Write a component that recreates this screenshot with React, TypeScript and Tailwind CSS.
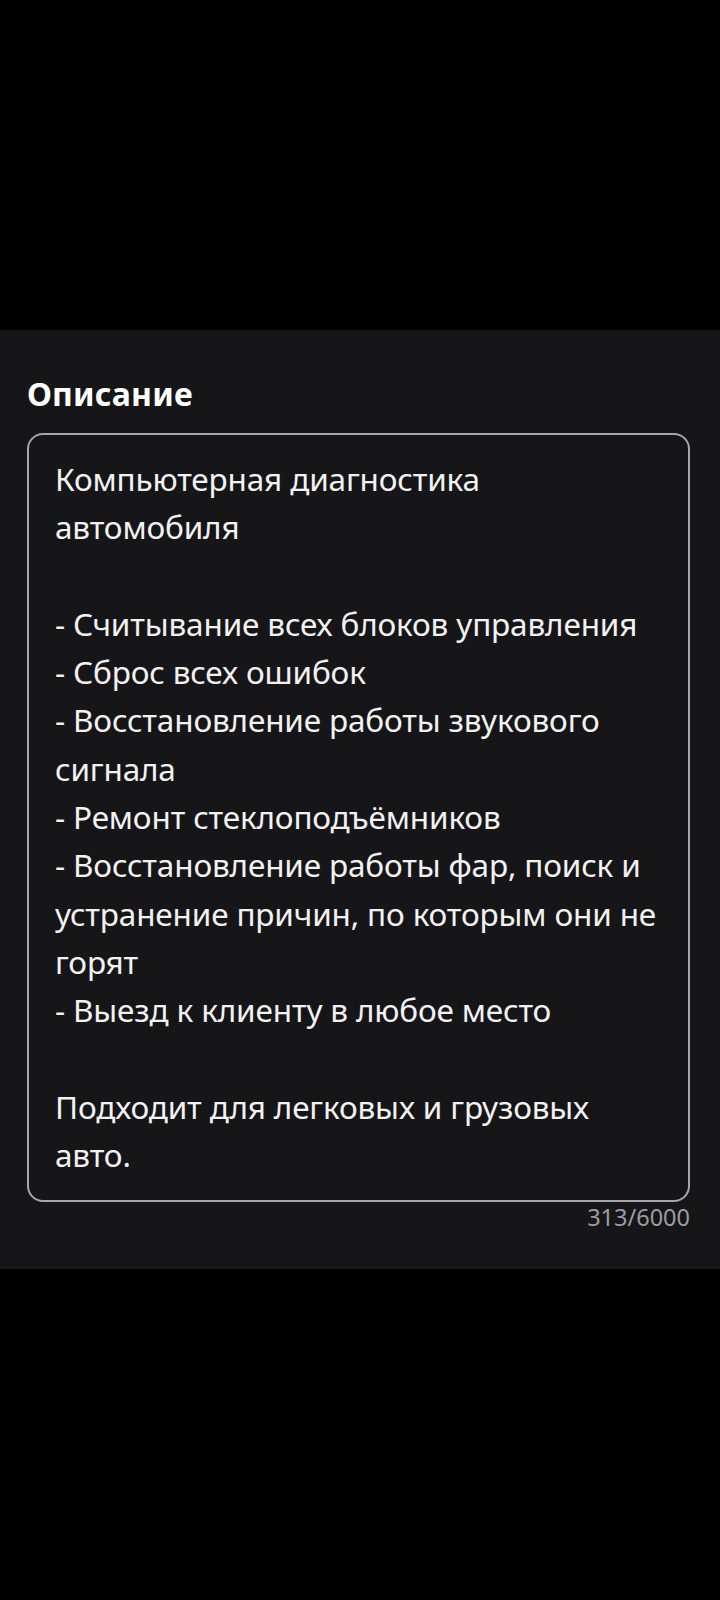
import React from "react";

const lines: string[] = [
  "Компьютерная диагностика",
  "автомобиля",
  "",
  "- Считывание всех блоков управления",
  "- Сброс всех ошибок",
  "- Восстановление работы звукового",
  "сигнала",
  "- Ремонт стеклоподъёмников",
  "- Восстановление работы фар, поиск и",
  "устранение причин, по которым они не",
  "горят",
  "- Выезд к клиенту в любое место",
  "",
  "Подходит для легковых и грузовых",
  "авто.",
];

export default function App() {
  return (
    <div className="w-[720px] h-[1600px] bg-black flex flex-col" style={{ fontFamily: '"Noto Sans", "Open Sans", sans-serif' }}>
      <div className="h-[330px]" />
      <div className="bg-[#161618] pl-[27px] pr-[30px] pt-[44px] pb-[37px]">
        <h2 className="text-[32px] font-bold text-white leading-[40px] tracking-[0.2px]">Описание</h2>
        <div className="mt-[19px] border-2 border-[#a6a6ab] rounded-[16px] pl-[26px] pr-[10px] pt-[20px] pb-[21px]">
          {lines.map((l, i) => (
            <div key={i} className="text-[31.5px] leading-[48.3px] text-[#f2f2f2] h-[48.3px] whitespace-nowrap tracking-[-0.15px]">
              {l}
            </div>
          ))}
        </div>
        <div className="text-right text-[23.5px] leading-[30px] text-[#9c9ca0]">313/6000</div>
      </div>
    </div>
  );
}
